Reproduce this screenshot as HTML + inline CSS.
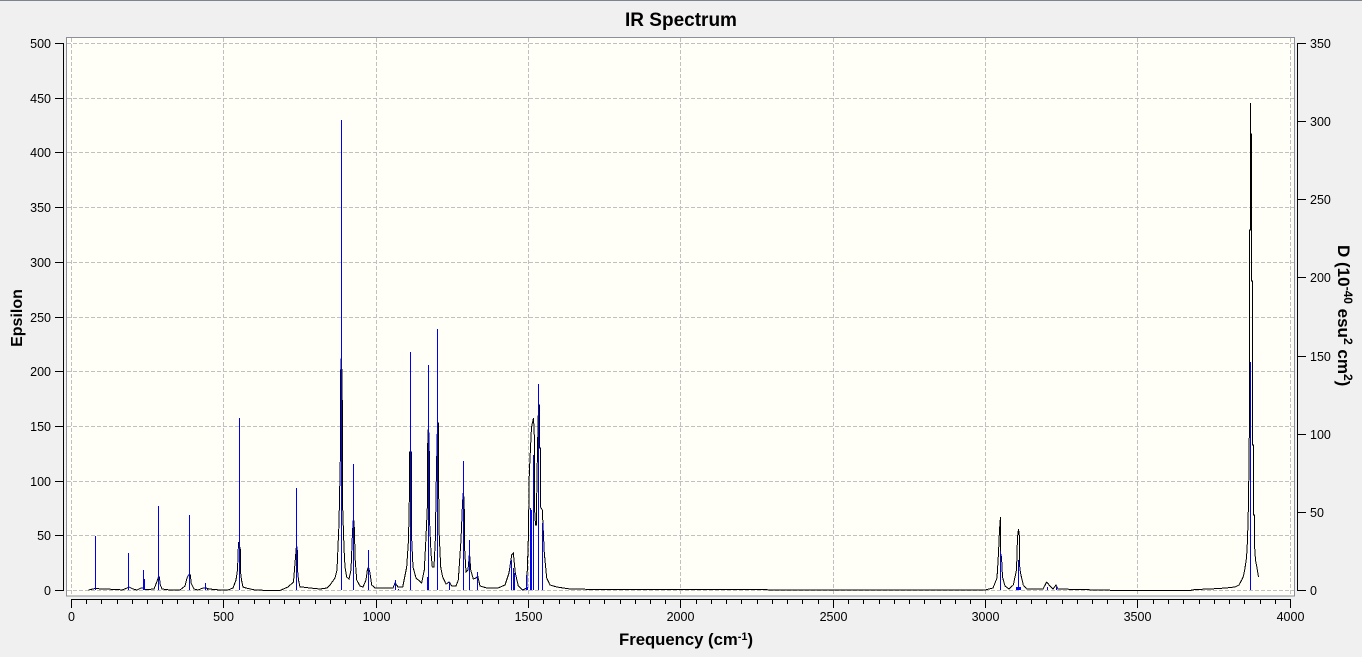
<!DOCTYPE html>
<html><head><meta charset="utf-8"><title>IR Spectrum</title>
<style>
html,body{margin:0;padding:0;background:#f0f0f0}
svg{display:block}
text{font-family:"Liberation Sans",sans-serif;fill:#000}
.n{font-size:12.5px}
.b{font-weight:bold;font-size:16.7px}
</style></head><body>
<svg width="1362" height="657" viewBox="0 0 1362 657" xmlns="http://www.w3.org/2000/svg">
<rect width="1362" height="657" fill="#f0f0f0"/>
<rect width="1362" height="1" fill="#7f8590"/>
<text x="681" y="26" text-anchor="middle" font-size="19" font-weight="bold">IR Spectrum</text>
<rect x="66.5" y="37.5" width="1228" height="558.5" fill="#fffff8" stroke="#8a8f99" shape-rendering="crispEdges"/>
<g stroke="#c0c0c0" stroke-width="1" stroke-dasharray="4 2" fill="none" shape-rendering="crispEdges">
<path d="M67 43.5H1294M67 98.5H1294M67 152.5H1294M67 207.5H1294M67 262.5H1294M67 317.5H1294M67 371.5H1294M67 426.5H1294M67 481.5H1294M67 535.5H1294M67 590.5H1294"/>
<path d="M71.5 38V595M223.5 38V595M376.5 38V595M528.5 38V595M680.5 38V595M833.5 38V595M985.5 38V595M1137.5 38V595M1290.5 38V595"/>
</g>
<polyline fill="none" stroke="#000" stroke-width="1" shape-rendering="crispEdges" points="88.5,590 95,588.5 103,589 118,589.5 122,590 126,588.5 129,587 133,589 137,590 141,588 143,588 145,589.5 148,589.5 154,589 156,584 157.5,580 158.5,577 159.5,577 160,584 162,589 170,590 180,590 185,586 187,578 188.5,575 190.5,575 191,583 194,589 198,590 203,588 206,588 209,589 220,590 228,590 233,588 236,580 237.5,570 238.5,542 240.5,550 240.5,572 241.5,580 243,587 246,588 255,590 270,590.5 280,590.5 288,587 293.5,582 295.5,557 296.5,545 297.5,552 297.5,570 298.5,580 300,587 302,587 310,588 320,589 327,588 330,585 335,578 337,570 339,523 340.5,450 340.5,375 341.5,353 342.5,415 342.5,503 344,548 345,567 346.7,577 349,579 351,570 352.5,532 353.5,517 354.5,530 355,557 356.7,580 360,586 363,587 366,580 367.5,569 368.5,567 370,573 371.7,585 375,588 393,588 395,583 396.7,585 398,587 402.7,587 406.7,567 408.5,540 409.5,490 409.5,452 411.5,452 411.5,488 411.7,540 413,567 416,578 421.7,583 424.3,570 426,537 427.5,503 427.5,450 428.5,423 429.5,460 429.5,520 431,553 432.3,567 434,567 435.3,540 436.5,467 437.5,423 438.5,423 438.5,467 439,530 440.7,567 442.7,577 446,584 449.3,582 451.7,586 456,586 458.3,580 461,540 462.5,503 463.5,490 464.5,515 464.7,550 466,572 468,570 469.5,553 470.7,570 473.3,579 476,578 477.7,576 480,586 486.7,588 498,588 505,585 509,573 511.7,555 513.3,553 515.3,573 518.3,586 522.7,590 526.7,588 528.3,540 529.3,473 531.5,427 533.5,418 534.5,440 534.5,508 535.5,525 536.5,525 536.5,508 537.5,448 538.5,405 539.5,405 539.5,448 540.5,448 540.5,507 542.3,510 544.3,553 546.7,578 550,585 556.7,587 570,589 600,589.5 760,589.5 775,590 960,590 985,590 993,588 997,578 998.5,553 999.5,530 1000.5,517 1000.5,553 1001.5,557 1002.5,577 1005,586 1009,589 1013.3,585 1016.5,570 1017.5,537 1018.5,529 1019.5,537 1019.5,565 1020.5,573 1023.3,585 1026.7,589 1043,589 1046.7,582 1050,586 1053,589 1056,585 1058,589 1100,590 1120,590.5 1190,590.5 1195,589.5 1210,589 1226,588 1235,587 1239,585 1241.7,580 1243.5,576 1245,568 1246.5,558 1247.5,540 1248.5,503 1249.5,417 1249.5,230 1250.5,230 1250.5,103 1250.5,134 1251.5,134 1251.5,281 1252.5,281 1252.5,445 1253.5,445 1253.5,515 1254.5,515 1254.5,545 1255.5,560 1257,568 1258.5,577"/>
<path fill="none" stroke="#0000f0" stroke-width="1" shape-rendering="crispEdges" d="M95.5 536V590M128.5 553V590M143.5 570V590M144.5 579V590M158.5 506V590M189.5 515V590M205.5 583V590M207.5 589V590M239.5 418V590M296.5 488V590M341.5 120V590M353.5 464V590M368.5 550V590M395.5 580V590M398.5 589V590M410.5 352V590M428.5 365V590M427.5 577V590M437.5 329V590M449.5 582V590M463.5 461V590M469.5 540V590M477.5 572V590M511.5 560V590M513.5 568V590M514.5 573V590M522.5 589V590M526.5 575V590M527.5 587V590M530.5 508V590M531.5 510V590M533.5 455V590M538.5 384V590M542.5 523V590M1000.5 551V590M1016.5 587V590M1017.5 587V590M1018.5 560V590M1019.5 587V590M1020.5 587V590M1047.5 587V590M1056.5 587V590M1250.5 362V590"/>
<g stroke="#000" stroke-width="1" fill="none" shape-rendering="crispEdges">
<path d="M63.5 43V591M55 43.5H64M55 98.5H64M55 152.5H64M55 207.5H64M55 262.5H64M55 317.5H64M55 371.5H64M55 426.5H64M55 481.5H64M55 535.5H64M55 590.5H64"/>
<path d="M1297.5 43V591M1297 43.5H1306M1297 121.5H1306M1297 199.5H1306M1297 277.5H1306M1297 356.5H1306M1297 434.5H1306M1297 512.5H1306M1297 590.5H1306"/>
<path d="M71 599.5H1291M71.5 600V608M223.5 600V608M376.5 600V608M528.5 600V608M680.5 600V608M833.5 600V608M985.5 600V608M1137.5 600V608M1290.5 600V608"/>
<path d="M86.5 600V604M101.5 600V604M117.5 600V604M132.5 600V604M147.5 600V604M162.5 600V604M177.5 600V604M193.5 600V604M208.5 600V604M238.5 600V604M254.5 600V604M269.5 600V604M284.5 600V604M299.5 600V604M315.5 600V604M330.5 600V604M345.5 600V604M360.5 600V604M391.5 600V604M406.5 600V604M421.5 600V604M437.5 600V604M452.5 600V604M467.5 600V604M482.5 600V604M498.5 600V604M513.5 600V604M543.5 600V604M559.5 600V604M574.5 600V604M589.5 600V604M604.5 600V604M620.5 600V604M635.5 600V604M650.5 600V604M665.5 600V604M696.5 600V604M711.5 600V604M726.5 600V604M741.5 600V604M757.5 600V604M772.5 600V604M787.5 600V604M802.5 600V604M818.5 600V604M848.5 600V604M863.5 600V604M879.5 600V604M894.5 600V604M909.5 600V604M924.5 600V604M940.5 600V604M955.5 600V604M970.5 600V604M1001.5 600V604M1016.5 600V604M1031.5 600V604M1046.5 600V604M1062.5 600V604M1077.5 600V604M1092.5 600V604M1107.5 600V604M1123.5 600V604M1153.5 600V604M1168.5 600V604M1183.5 600V604M1199.5 600V604M1214.5 600V604M1229.5 600V604M1244.5 600V604M1260.5 600V604M1275.5 600V604"/>
</g>
<g text-anchor="end">
<text class="n" x="51" y="48">500</text><text class="n" x="51" y="103">450</text><text class="n" x="51" y="157">400</text><text class="n" x="51" y="212">350</text><text class="n" x="51" y="267">300</text><text class="n" x="51" y="322">250</text><text class="n" x="51" y="376">200</text><text class="n" x="51" y="431">150</text><text class="n" x="51" y="486">100</text><text class="n" x="51" y="540">50</text><text class="n" x="51" y="595">0</text>
</g>
<g>
<text class="n" x="1310" y="48">350</text><text class="n" x="1310" y="126">300</text><text class="n" x="1310" y="204">250</text><text class="n" x="1310" y="282">200</text><text class="n" x="1310" y="361">150</text><text class="n" x="1310" y="439">100</text><text class="n" x="1310" y="517">50</text><text class="n" x="1310" y="595">0</text>
</g>
<g text-anchor="middle">
<text class="n" x="71.5" y="621">0</text><text class="n" x="223.5" y="621">500</text><text class="n" x="376.5" y="621">1000</text><text class="n" x="528.5" y="621">1500</text><text class="n" x="680.5" y="621">2000</text><text class="n" x="833.5" y="621">2500</text><text class="n" x="985.5" y="621">3000</text><text class="n" x="1137.5" y="621">3500</text><text class="n" x="1290.5" y="621">4000</text>
</g>
<text class="b" x="619" y="645">Frequency (cm<tspan font-size="11" dy="-5">-1</tspan><tspan dy="5">)</tspan></text>
<text transform="translate(22 318) rotate(-90)" text-anchor="middle" font-size="16" font-weight="bold">Epsilon</text>
<text transform="translate(1338 245) rotate(90)" font-size="17" font-weight="bold">D (10<tspan font-size="12" dy="-6">-40</tspan><tspan dy="6"> esu</tspan><tspan font-size="12" dy="-6">2</tspan><tspan dy="6"> cm</tspan><tspan font-size="12" dy="-6">2</tspan><tspan dy="6">)</tspan></text>
</svg>
</body></html>
